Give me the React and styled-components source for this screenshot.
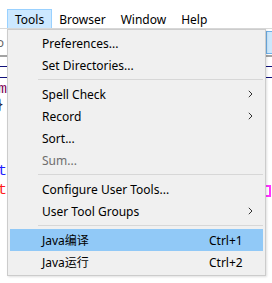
import React from 'react';
import styled, { createGlobalStyle } from 'styled-components';

const GlobalStyle = createGlobalStyle`
    html, body {
        margin: 0;
        padding: 0;
        background: #ffffff;
        overflow: hidden;
    }
`;

const uiFont = `"Noto Sans", "Noto Sans CJK SC", sans-serif`;

// 전체 창
const Screen = styled.div`
    position: relative;
    width: 272px;
    height: 283px;
    overflow: hidden;
    background: #ffffff;
    font-family: ${uiFont};
`;

// 상단 메뉴바
const MenuBar = styled.div`
    display: flex;
    align-items: flex-end;
    height: 29px;
    padding-left: 7px;
    border-bottom: 1px solid #d9d9d9;
    box-sizing: border-box;
`;

const BarItem = styled.div`
    display: flex;
    align-items: center;
    height: 19px;
    padding: 0 7px;
    font-size: 12px;
    color: #000;
    box-sizing: border-box;
    background: ${p => (p.$open ? '#cce8ff' : 'transparent')};
    border: 1px solid ${p => (p.$open ? '#99d1ff' : 'transparent')};
    border-bottom: none;
    margin-left: ${p => (p.$open ? '0' : '-1px')};
`;

// 툴바 (메뉴 아래)
const ToolRow = styled.div`
    display: flex;
    justify-content: space-between;
    align-items: center;
    height: 28px;
    border-bottom: 2px solid #a3a3a3;
    box-sizing: border-box;
`;

const ToolInput = styled.span`
    margin-left: -12px;
    font-size: 12px;
    color: #666;
`;

const ToolButton = styled.div`
    width: 10px;
    height: 23px;
    margin-right: -4px;
    background: #cde8fc;
    border: 1px solid #6fb0e8;
    box-sizing: border-box;
`;

// 탭 줄
const TabStrip = styled.div`
    margin-top: 9px;
    height: 12px;
    border-top: 1px solid #10107a;
    border-bottom: 1px solid #10107a;
    box-sizing: border-box;
`;

// 코드 영역
const CodeArea = styled.div`
    display: flex;
    flex-direction: column;
    font-family: "Liberation Mono", monospace;
    font-size: 15px;
`;

const CodeLine = styled.div`
    display: flex;
    justify-content: space-between;
    align-items: center;
    height: 18px;
    line-height: 18px;
    margin-top: ${p => p.$top || 0}px;
`;

const Frag = styled.span`
    color: ${p => p.$color};
    margin-left: ${p => p.$shift || 0}px;
    white-space: pre;
`;

const MatchBox = styled.span`
    width: 8px;
    height: 12px;
    margin-right: 1px;
    border: 2px solid #ff33ff;
    box-sizing: border-box;
`;

// 드롭다운 메뉴
const Popup = styled.div`
    position: absolute;
    left: 7px;
    top: 29px;
    width: 259px;
    height: 247px;
    padding: 2px 0;
    box-sizing: border-box;
    background: #f0f0f0;
    border: 1px solid #cccccc;
    box-shadow: 1px 1px 2px rgba(0, 0, 0, 0.12);
    display: flex;
    flex-direction: column;
    font-family: ${uiFont};
    font-size: 12px;
`;

const Item = styled.div`
    display: flex;
    align-items: center;
    height: 22px;
    margin: 0 2px;
    padding-left: 32px;
    padding-right: 10px;
    color: ${p => (p.$disabled ? '#6d6d6d' : '#000')};
    background: ${p => (p.$active ? '#91c9f7' : 'transparent')};
`;

const Label = styled.span`
    flex: 1;
    white-space: nowrap;
`;

const Shortcut = styled.span`
    width: 44px;
    white-space: nowrap;
`;

const Separator = styled.div`
    height: 7px;
    margin-left: 30px;
    margin-right: 2px;
    display: flex;
    align-items: flex-start;
    padding-top: 3px;
    box-sizing: border-box;
    &::after {
        content: '';
        flex: 1;
        height: 1px;
        background: #d7d7d7;
    }
`;

const Chevron = () => (
    <svg width="5" height="8" viewBox="0 0 5 8">
        <path d="M0.8 0.8 L4 4 L0.8 7.2" fill="none" stroke="#333" strokeWidth="1" />
    </svg>
);

const menu = [
    { label: 'Preferences...' },
    { label: 'Set Directories...' },
    { sep: true },
    { label: 'Spell Check', sub: true },
    { label: 'Record', sub: true },
    { label: 'Sort...' },
    { label: 'Sum...', disabled: true },
    { sep: true },
    { label: 'Configure User Tools...' },
    { label: 'User Tool Groups', sub: true },
    { sep: true },
    { label: 'Java编译', key: 'Ctrl+1', active: true },
    { label: 'Java运行', key: 'Ctrl+2' },
];

const App = () => {
    return (
        <Screen>
            <GlobalStyle />
            <MenuBar>
                <BarItem $open>Tools</BarItem>
                <BarItem>Browser</BarItem>
                <BarItem>Window</BarItem>
                <BarItem>Help</BarItem>
            </MenuBar>
            <ToolRow>
                <ToolInput>Go</ToolInput>
                <ToolButton />
            </ToolRow>
            <TabStrip />
            <CodeArea>
                <CodeLine $top={3}>
                    <Frag $color="#7f0055" $shift={-11}>am</Frag>
                </CodeLine>
                <CodeLine $top={-2}>
                    <Frag $color="#1a1a40" $shift={-5}>}</Frag>
                </CodeLine>
                <CodeLine $top={48}>
                    <Frag $color="#1d1dff" $shift={-2}>t</Frag>
                </CodeLine>
                <CodeLine $top={1}>
                    <Frag $color="#ff1a1a" $shift={-2}>t</Frag>
                    <MatchBox />
                </CodeLine>
            </CodeArea>
            <Popup>
                {menu.map((m, i) =>
                    m.sep ? (
                        <Separator key={i} />
                    ) : (
                        <Item key={i} $active={m.active} $disabled={m.disabled}>
                            <Label>{m.label}</Label>
                            {m.key && <Shortcut>{m.key}</Shortcut>}
                            {m.sub && <Chevron />}
                        </Item>
                    )
                )}
            </Popup>
        </Screen>
    );
};

export default App;
